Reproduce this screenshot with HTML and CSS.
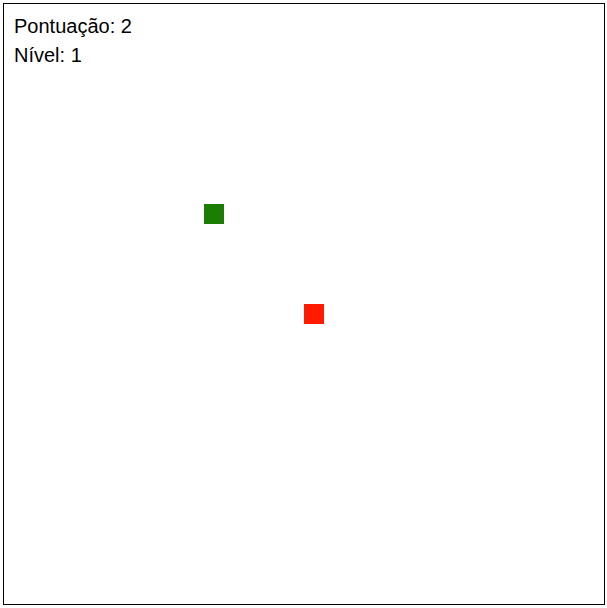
FILE: index.html
```html
<!DOCTYPE html>
<html lang="pt">
<head>
<meta charset="utf-8">
<link rel="stylesheet" href="styles.css">
</head>
<body>
<div class="game">
  <div class="hud">
    <div class="hud-line">Pontuação: 2</div>
    <div class="hud-line">Nível: 1</div>
  </div>
  <div class="cell snake" style="left:200px;top:200px"></div>
  <div class="cell food" style="left:300px;top:300px"></div>
</div>
</body>
</html>
```
FILE: styles.css
```css
html, body {
  margin: 0;
  padding: 0;
  background: #fff;
}
body {
  padding: 3px;
}
.game {
  position: relative;
  width: 600px;
  height: 600px;
  border: 1px solid #000;
  background: #fff;
}
.hud {
  position: absolute;
  left: 10px;
  top: 8px;
  font-family: "Liberation Sans", Arial, sans-serif;
  font-size: 20px;
  line-height: 29px;
  color: #000;
}
.cell {
  position: absolute;
  width: 20px;
  height: 20px;
}
.snake {
  background: #1c7d04;
}
.food {
  background: #ff1a00;
}
```
